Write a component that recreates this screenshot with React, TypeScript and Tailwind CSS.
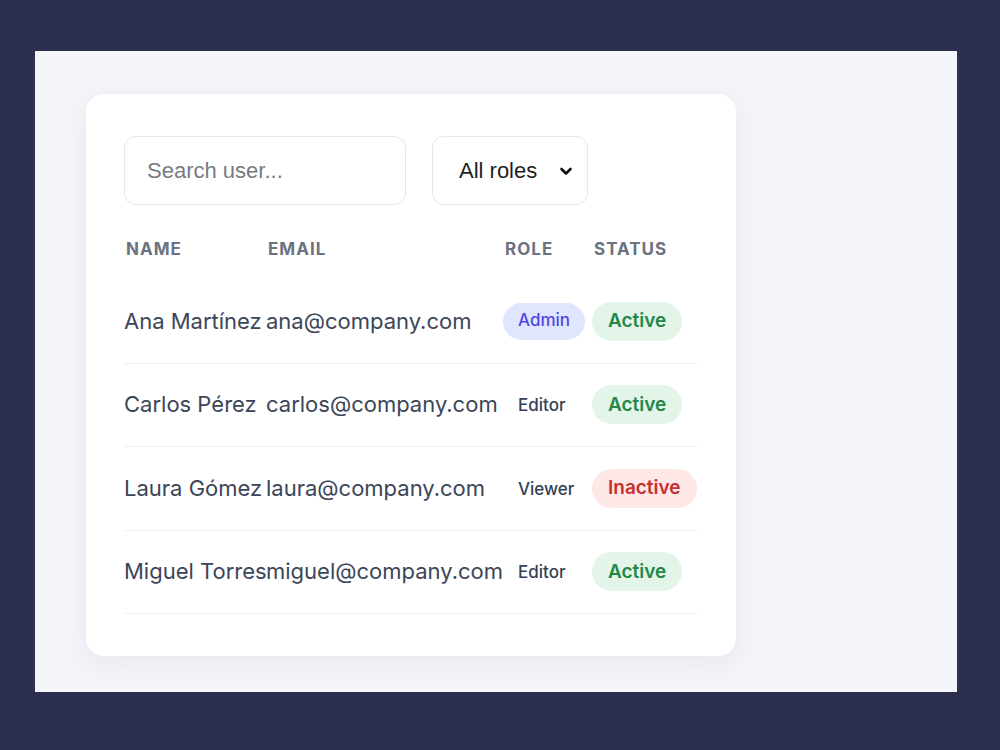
import React from 'react';

type User = {
    name: string;
    email: string;
    role: 'Admin' | 'Editor' | 'Viewer';
    active: boolean;
};

const users: User[] = [
    { name: 'Ana Martínez', email: 'ana@company.com', role: 'Admin', active: true },
    { name: 'Carlos Pérez', email: 'carlos@company.com', role: 'Editor', active: true },
    { name: 'Laura Gómez', email: 'laura@company.com', role: 'Viewer', active: false },
    { name: 'Miguel Torres', email: 'miguel@company.com', role: 'Editor', active: true },
];

function RoleBadge({ role }: { role: User['role'] }) {
    if (role === 'Admin') {
        return (
            <span className="inline-flex h-[37px] items-center rounded-full bg-[#e0e6fd] px-[15px] text-[17px] font-medium text-[#4f46e5]">
                {role}
            </span>
        );
    }
    return (
        <span className="inline-flex h-[37px] translate-y-[1px] items-center px-[15px] text-[17px] font-medium text-[#334155]">
            {role}
        </span>
    );
}

function StatusBadge({ active }: { active: boolean }) {
    return active ? (
        <span className="inline-flex h-[39px] items-center rounded-full bg-[#e3f5e8] px-[16px] text-[19px] font-semibold text-[#23874a]">
            Active
        </span>
    ) : (
        <span className="inline-flex h-[39px] items-center rounded-full bg-[#fde7e7] px-[16px] text-[19px] font-semibold text-[#c53030]">
            Inactive
        </span>
    );
}

export default function App() {
    return (
        <div className="h-[750px] w-[1000px] bg-[#2c2f4d] pl-[35px] pt-[51px]" style={{ fontFamily: 'Inter, "Noto Sans", sans-serif' }}>
            <div className="h-[641px] w-[922px] bg-[#f4f5f9] pl-[51px] pt-[43px]">
                <div className="h-[562px] w-[650px] rounded-[18px] bg-white px-[38px] pt-[42px] shadow-[0_8px_30px_rgba(30,35,70,0.06)]">
                    {/* Filters */}
                    <div className="flex gap-[26px]">
                        <input
                            type="text"
                            placeholder="Search user..."
                            className="h-[69px] w-[282px] rounded-[12px] border border-[#e3e6ec] px-[22px] text-[22px] text-[#334155] placeholder:text-[#777b82] focus:outline-none"
                            style={{ fontFamily: '"Liberation Sans", Arial, sans-serif' }}
                        />
                        <div className="relative">
                            <select
                                className="h-[69px] w-[156px] appearance-none rounded-[12px] border border-[#e3e6ec] bg-white pl-[26px] text-[22px] text-[#1f1f1f] focus:outline-none"
                                style={{ fontFamily: '"Liberation Sans", Arial, sans-serif' }}
                            >
                                <option>All roles</option>
                                <option>Admin</option>
                                <option>Editor</option>
                                <option>Viewer</option>
                            </select>
                            <svg
                                className="pointer-events-none absolute right-[15px] top-1/2 h-[14px] w-[14px] -translate-y-1/2"
                                viewBox="0 0 14 14"
                                fill="none"
                                stroke="#111"
                                strokeWidth="2.6"
                                strokeLinecap="round"
                                strokeLinejoin="round"
                            >
                                <path d="M2.5 5l4.5 4.5L11.5 5" />
                            </svg>
                        </div>
                    </div>

                    {/* Table */}
                    <table className="mt-[15px] w-[574px] table-fixed border-collapse">
                        <colgroup>
                            <col className="w-[142px]" />
                            <col className="w-[237px]" />
                            <col className="w-[89px]" />
                            <col />
                        </colgroup>
                        <thead>
                            <tr className="h-[59.5px] text-left text-[17px] font-bold uppercase tracking-[0.06em] text-[#6b7280]">
                                <th className="pl-[2px] font-bold">Name</th>
                                <th className="pl-[2px] font-bold">Email</th>
                                <th className="pl-[2px] font-bold">Role</th>
                                <th className="pl-[2px] font-bold">Status</th>
                            </tr>
                        </thead>
                        <tbody>
                            {users.map((u) => (
                                <tr key={u.email} className="h-[83.5px] border-b border-[#edf1f6] text-[22px] text-[#3b4658]">
                                    <td className="whitespace-nowrap">{u.name}</td>
                                    <td className="whitespace-nowrap">{u.email}</td>
                                    <td>
                                        <RoleBadge role={u.role} />
                                    </td>
                                    <td>
                                        <StatusBadge active={u.active} />
                                    </td>
                                </tr>
                            ))}
                        </tbody>
                    </table>
                </div>
            </div>
        </div>
    );
}
